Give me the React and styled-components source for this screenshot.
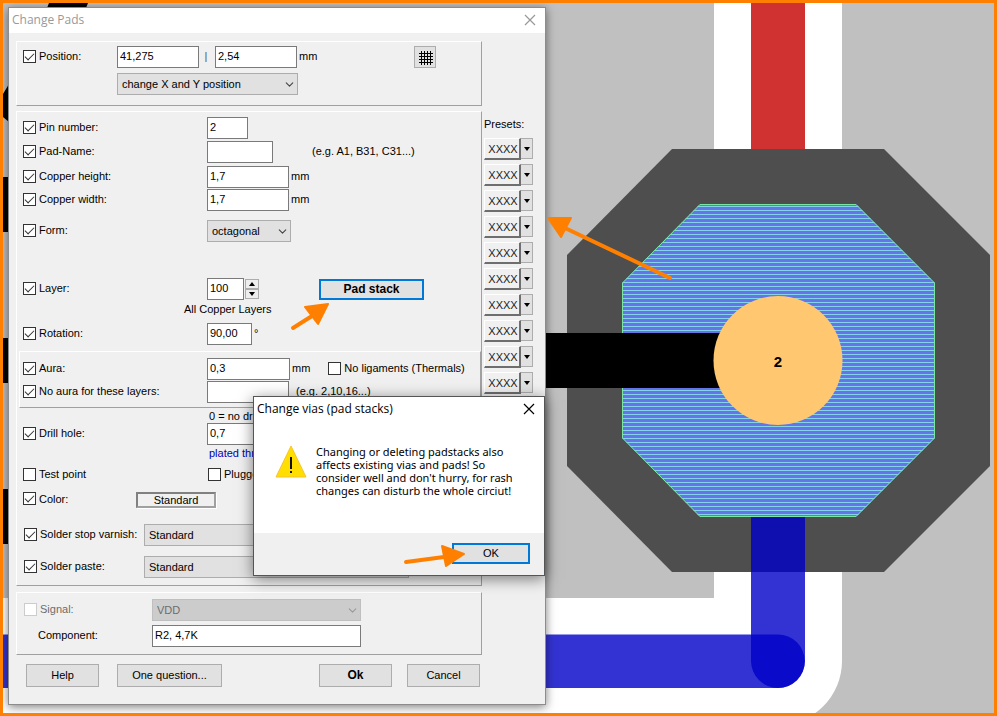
import React from "react";
import styled, { createGlobalStyle, css } from "styled-components";
import { ChevronDown } from "lucide-react";

const GlobalStyle = createGlobalStyle`
  *, *::before, *::after { box-sizing: border-box; }
  body { margin: 0; font: 11px/14px "Liberation Sans", Arial, sans-serif; color: #000; }
  input, select, button { font: inherit; color: inherit; margin: 0; border-radius: 0; }
`;

const Stage = styled.main`
  position: relative;
  min-height: 100vh;
  padding: 4px 5px;
  border: 3px solid #ff8000;
  background: #c0c0c0;
  overflow: hidden;
`;

const Board = styled.svg`
  position: absolute;
  inset: 0;
  width: 100%;
  height: 100%;
`;

const Annotations = styled(Board)`
  pointer-events: none;
`;

const Dialog = styled.section`
  position: relative;
  width: 100%;
  max-width: 538px;
  border: 1px solid #8c8c8c;
  background: #f0f0f0;
  box-shadow: 0 2px 9px rgba(0, 0, 0, 0.5);
`;

const TitleBar = styled.header`
  display: flex;
  align-items: center;
  justify-content: space-between;
  height: 25px;
  padding: 0 7px 2px 3px;
  background: #fff;
  color: ${(p) => (p.$active ? "#000" : "#999")};
`;

const Title = styled.h1`
  margin: 0;
  font: 12px/16px "Open Sans", "Noto Sans", sans-serif;
`;

const CloseButton = styled.button`
  display: grid;
  place-items: center;
  width: 16px;
  height: 16px;
  padding: 0;
  border: 0;
  background: none;
`;

const Body = styled.form`
  display: flex;
  gap: 2px;
  padding: 8px 7px 17px;
`;

const Main = styled.div`
  display: flex;
  flex-direction: column;
  width: 466px;
`;

const Group = styled.div`
  display: flex;
  flex-direction: column;
  margin-top: ${(p) => p.$gap || 0}px;
  padding: ${(p) => p.$pad};
  border: 1px solid;
  border-color: #fff #a0a0a0 #a0a0a0 #fff;
  ${(p) => p.$nested && css`margin-left: 2px;`}
`;

const Row = styled.div`
  display: grid;
  grid-template-columns: ${(p) => p.$label || 184}px 1fr;
  align-items: center;
  min-height: ${(p) => p.$height || 22}px;
  margin-top: ${(p) => p.$gap || 0}px;
  padding-left: ${(p) => p.$indent || 6}px;
`;

const Cell = styled.div`
  display: flex;
  align-items: center;
  grid-column: 2;
  white-space: nowrap;
`;

const Caption = styled.span`
  grid-column: 2;
  padding-left: 2px;
  color: ${(p) => (p.$blue ? "#0000b4" : "inherit")};
  white-space: nowrap;
`;

const Unit = styled.span`
  margin-left: 2px;
  padding-bottom: 2px;
`;

const Hint = styled.span`
  margin-left: ${(p) => p.$by}px;
  padding-bottom: 2px;
`;

const Separator = styled.span`
  width: 16px;
  padding: 0 2px 2px 0;
  text-align: center;
  color: #555;
`;

const Pushed = styled.div`
  display: flex;
  margin-left: ${(p) => p.$by}px;
`;

const CheckLabel = styled.label`
  display: flex;
  align-items: center;
  gap: 3px;
  padding-bottom: 2px;
  white-space: nowrap;
  color: ${(p) => (p.$muted ? "#6d6d6d" : "inherit")};
`;

const PlainLabel = styled.label`
  padding: 0 0 2px 14px;
`;

const Box = styled.input`
  appearance: none;
  display: grid;
  place-items: start center;
  width: 13px;
  height: 13px;
  flex: none;
  border: 1px solid #333;
  background: #fff;
  &:checked::before {
    content: "";
    width: 9px;
    height: 5px;
    margin-top: 2px;
    border: solid #333;
    border-width: 0 0 1px 1px;
    transform: rotate(-45deg);
  }
  &:disabled { border-color: #ccc; }
`;

const Field = styled.input`
  width: ${(p) => p.$w}px;
  height: 22px;
  padding: 0 2px 2px;
  border: 1px solid #7a7a7a;
  background: #fff;
`;

const SelectFrame = styled.div`
  display: inline-grid;
  width: ${(p) => p.$w}px;
  align-items: center;
  & > * { grid-area: 1 / 1; }
  & > svg {
    justify-self: end;
    margin-right: 2px;
    color: ${(p) => (p.$muted ? "#999" : "#444")};
    pointer-events: none;
  }
`;

const Select = styled.select`
  appearance: none;
  width: 100%;
  height: 22px;
  padding: 0 18px 0 4px;
  border: 1px solid #adadad;
  background: #e1e1e1;
  &:disabled {
    border-color: #bfbfbf;
    background: #ccc;
    color: #6d6d6d;
    opacity: 1;
  }
`;

const PushButton = styled.button`
  width: ${(p) => p.$w}px;
  height: ${(p) => p.$h || 23}px;
  padding: 0 0 1px;
  border: ${(p) => (p.$focus ? "2px solid #0078d7" : "1px solid #adadad")};
  background: #e1e1e1;
  ${(p) => p.$strong && css`font: bold 12px/14px "Liberation Sans", Arial, sans-serif;`}
`;

const GridButton = styled.button`
  display: grid;
  place-items: center;
  width: 22px;
  height: 22px;
  padding: 2px 0 0 2px;
  border: 1px solid #adadad;
  background: #e1e1e1;
`;

const ColorButton = styled.button`
  width: 80px;
  height: 16px;
  padding: 0;
  line-height: 12px;
  border: 2px solid;
  border-color: #808080 #a0a0a0 #a0a0a0 #808080;
  box-shadow: 1px 1px 0 #fff;
  background: #f0f0f0;
`;

const Spinner = styled.div`
  display: grid;
  grid-template-rows: 1fr 1fr;
  width: 14px;
  height: 20px;
  margin-left: 1px;
`;

const SpinButton = styled.button`
  display: grid;
  place-items: center;
  padding: 0;
  border: 1px solid #adadad;
  background: #eee;
`;

const Presets = styled.aside`
  display: flex;
  flex-direction: column;
  gap: 4px;
  padding-top: 76px;
`;

const PresetsTitle = styled.span`
  margin-bottom: 3px;
`;

const Preset = styled.div`
  display: grid;
  grid-template-columns: 37px 12px;
  height: 22px;
`;

const PresetButton = styled.button`
  padding: 0 0 0 2px;
  border: solid;
  border-width: 1px 2px 2px 1px;
  border-color: #fff #6e6e6e #6e6e6e #fff;
  background: #f0f0f0;
  color: #222;
`;

const PresetMenu = styled.button`
  display: grid;
  place-items: center;
  height: 21px;
  padding: 0;
  border: 1px solid #adadad;
  border-left: 0;
  background: #e1e1e1;
`;

const Footer = styled.div`
  display: flex;
  justify-content: space-between;
  margin-top: 9px;
  padding: 0 2px 0 10px;
`;

const Actions = styled.div`
  display: flex;
  gap: ${(p) => p.$gap}px;
`;

const Popup = styled.section`
  position: absolute;
  right: 0;
  bottom: 128px;
  width: 292px;
  border: 1px solid #555;
  background: #fff;
  box-shadow: 0 3px 14px rgba(0, 0, 0, 0.5);
`;

const Message = styled.div`
  display: flex;
  gap: 9px;
  min-height: 111px;
  padding: 23px 20px 0 21px;
`;

const MessageText = styled.p`
  margin: 0;
  font: 11px/13px "Noto Sans", sans-serif;
  white-space: pre-line;
`;

const PopupFooter = styled.footer`
  display: flex;
  justify-content: flex-end;
  padding: 10px 14px 11px;
  background: #f0f0f0;
`;

function Check({ label, ...rest }) {
  return (
    <CheckLabel $muted={rest.disabled}>
      <Box type="checkbox" {...rest} />
      {label}
    </CheckLabel>
  );
}

function Dropdown({ w, value, disabled, label }) {
  return (
    <SelectFrame $w={w} $muted={disabled}>
      <Select aria-label={label} disabled={disabled} defaultValue={value}>
        <option>{value}</option>
      </Select>
      <ChevronDown size={13} strokeWidth={2} />
    </SelectFrame>
  );
}

function CloseIcon() {
  return (
    <svg width="12" height="12" viewBox="0 0 12 12" stroke="currentColor" strokeWidth="1.2">
      <path d="M1 1L11 11M11 1L1 11" />
    </svg>
  );
}

function Triangle({ up }) {
  return (
    <svg width="6" height="4" viewBox="0 0 6 4">
      <path d={up ? "M0 4L3 0L6 4Z" : "M0 0L3 4L6 0Z"} />
    </svg>
  );
}

function GridIcon() {
  return (
    <svg width="14" height="14" viewBox="0 0 14 14" stroke="#000" shapeRendering="crispEdges">
      <path d="M2.5 0V14M5.5 0V14M8.5 0V14M11.5 0V14M0 2.5H14M0 5.5H14M0 8.5H14M0 11.5H14" />
    </svg>
  );
}

function WarningIcon() {
  return (
    <svg width="32" height="33" viewBox="0 0 32 33">
      <path d="M16 1L31 32H1Z" fill="#ffde00" stroke="#f5c431" strokeLinejoin="round" />
      <path d="M15 12H17V24H15ZM15 26H17V28H15Z" fill="#111" />
    </svg>
  );
}

const hatch = Array.from({ length: 78 }, (_, i) => 206 + i * 4).filter((y) => y < 516);

function BoardDrawing() {
  return (
    <Board viewBox="3 3 991 710" preserveAspectRatio="xMinYMin slice" aria-hidden="true">
      <defs>
        <clipPath id="pad">
          <path d="M700 204H856L935 283V438L856 517H700L622 438V283Z" />
        </clipPath>
      </defs>
      <path d="M714 0H842V661A64 64 0 0 1 778 725H0V598H714Z" fill="#fff" />
      <path d="M751 0H805V150H751Z" fill="#d03232" />
      <path d="M672 149H884L990 255V466L884 572H672L567 466V255Z" fill="#4e4e4e" />
      <path d="M0 634.5H778A26.5 26.5 0 0 1 778 688H0Z" fill="#0000c8" fillOpacity=".8" />
      <path d="M751 516H805V661A27 27 0 0 1 751 661Z" fill="#0000c8" fillOpacity=".8" />
      <g clipPath="url(#pad)">
        <path d="M620 200H940V520H620Z" fill="#6674ea" />
        {hatch.map((y) => (
          <path key={y} d={`M620 ${y + 0.5}H940`} stroke="#84d4e8" />
        ))}
      </g>
      <path d="M700 204.5H856L934.5 283V438L856 516.5H700L622.5 438V283Z" fill="none" stroke="#78e6a0" />
      <path d="M540 333H730V388H540Z" />
      <circle cx="778" cy="360.5" r="64.5" fill="#ffc870" />
      <text x="778" y="367" textAnchor="middle" fontFamily="Liberation Sans, sans-serif" fontWeight="bold" fontSize="15">
        2
      </text>
      <path d="M49 3H88L86 8H47ZM3 94L9 84V122L3 117ZM3 177H9V232H3ZM3 338H9V383H3ZM3 489H9V544H3Z" />
    </Board>
  );
}

function Arrows() {
  return (
    <Annotations viewBox="3 3 991 710" preserveAspectRatio="xMinYMin slice" aria-hidden="true">
      <g fill="#ff8000" stroke="#ff8000" strokeLinejoin="round" strokeLinecap="round">
        <path d="M548 218L571 218L561 237Z" strokeWidth="2" />
        <path d="M565 228L670 278" strokeWidth="4" />
        <path d="M328 304L305 307L318 324Z" strokeWidth="2" />
        <path d="M312 316L293 328" strokeWidth="4" />
        <path d="M464 554L442 546L446 566Z" strokeWidth="2" />
        <path d="M444 557L406 562" strokeWidth="4" />
      </g>
    </Annotations>
  );
}

export default function App() {
  return (
    <Stage>
      <GlobalStyle />
      <BoardDrawing />
      <Dialog aria-label="Change Pads">
        <TitleBar>
          <Title>Change Pads</Title>
          <CloseButton aria-label="Close"><CloseIcon /></CloseButton>
        </TitleBar>
        <Body onSubmit={(e) => e.preventDefault()}>
          <Main>
            <Group $pad="4px 0 10px">
              <Row $label={94}>
                <Check label="Position:" defaultChecked />
                <Cell>
                  <Field $w={82} aria-label="X position" defaultValue="41,275" />
                  <Separator>|</Separator>
                  <Field $w={82} aria-label="Y position" defaultValue="2,54" />
                  <Unit>mm</Unit>
                  <Pushed $by={97}>
                    <GridButton type="button" aria-label="Grid"><GridIcon /></GridButton>
                  </Pushed>
                </Cell>
              </Row>
              <Row $label={94} $gap={5}>
                <Cell><Dropdown w={181} value="change X and Y position" label="Position mode" /></Cell>
              </Row>
            </Group>

            <Group $gap={5} $pad="5px 0 7px">
              <Row>
                <Check label="Pin number:" defaultChecked />
                <Cell><Field $w={41} aria-label="Pin number" defaultValue="2" /></Cell>
              </Row>
              <Row $gap={2}>
                <Check label="Pad-Name:" defaultChecked />
                <Cell>
                  <Field $w={66} aria-label="Pad-Name" />
                  <Hint $by={39}>(e.g. A1, B31, C31...)</Hint>
                </Cell>
              </Row>
              <Row $gap={3}>
                <Check label="Copper height:" defaultChecked />
                <Cell><Field $w={82} aria-label="Copper height" defaultValue="1,7" /><Unit>mm</Unit></Cell>
              </Row>
              <Row $gap={1}>
                <Check label="Copper width:" defaultChecked />
                <Cell><Field $w={82} aria-label="Copper width" defaultValue="1,7" /><Unit>mm</Unit></Cell>
              </Row>
              <Row $gap={9}>
                <Check label="Form:" defaultChecked />
                <Cell><Dropdown w={84} value="octagonal" label="Form" /></Cell>
              </Row>
              <Row $gap={36}>
                <Check label="Layer:" defaultChecked />
                <Cell>
                  <Field $w={37} aria-label="Layer" defaultValue="100" />
                  <Spinner>
                    <SpinButton type="button" aria-label="Layer up"><Triangle up /></SpinButton>
                    <SpinButton type="button" aria-label="Layer down"><Triangle /></SpinButton>
                  </Spinner>
                  <Pushed $by={60}>
                    <PushButton type="button" $w={105} $h={21} $focus $strong>Pad stack</PushButton>
                  </Pushed>
                </Cell>
              </Row>
              <Row $label={159} $height={18}><Caption>All Copper Layers</Caption></Row>
              <Row $gap={5}>
                <Check label="Rotation:" defaultChecked />
                <Cell><Field $w={45} aria-label="Rotation" defaultValue="90,00" /><Unit>°</Unit></Cell>
              </Row>

              <Group $nested $gap={6} $pad="6px 0 4px">
                <Row $indent={3}>
                  <Check label="Aura:" defaultChecked />
                  <Cell>
                    <Field $w={83} aria-label="Aura" defaultValue="0,3" />
                    <Unit>mm</Unit>
                    <Pushed $by={18}><Check label="No ligaments (Thermals)" /></Pushed>
                  </Cell>
                </Row>
                <Row $gap={1} $indent={3}>
                  <Check label="No aura for these layers:" defaultChecked />
                  <Cell>
                    <Field $w={82} aria-label="No aura for these layers" />
                    <Hint $by={7}>(e.g. 2,10,16...)</Hint>
                  </Cell>
                </Row>
              </Group>

              <Row $height={15}><Caption>0 = no drilling</Caption></Row>
              <Row>
                <Check label="Drill hole:" defaultChecked />
                <Cell><Field $w={82} aria-label="Drill hole" defaultValue="0,7" /></Cell>
              </Row>
              <Row $height={15}><Caption $blue>plated through</Caption></Row>
              <Row $gap={7} $height={16} $label={185}>
                <Check label="Test point" />
                <Check label="Plugged" />
              </Row>
              <Row $gap={8} $height={17} $label={113}>
                <Check label="Color:" defaultChecked />
                <Cell><ColorButton type="button">Standard</ColorButton></Cell>
              </Row>
              <Row $gap={16} $label={120} $indent={7}>
                <Check label="Solder stop varnish:" defaultChecked />
                <Cell><Dropdown w={265} value="Standard" label="Solder stop varnish" /></Cell>
              </Row>
              <Row $gap={10} $label={120} $indent={7}>
                <Check label="Solder paste:" defaultChecked />
                <Cell><Dropdown w={265} value="Standard" label="Solder paste" /></Cell>
              </Row>
            </Group>

            <Group $gap={6} $pad="6px 0 7px">
              <Row $label={128} $indent={7}>
                <Check label="Signal:" disabled />
                <Cell><Dropdown w={209} value="VDD" label="Signal" disabled /></Cell>
              </Row>
              <Row $gap={4} $label={128} $indent={7}>
                <PlainLabel htmlFor="component">Component:</PlainLabel>
                <Cell><Field id="component" $w={209} defaultValue="R2, 4,7K" /></Cell>
              </Row>
            </Group>

            <Footer>
              <Actions $gap={18}>
                <PushButton type="button" $w={73}>Help</PushButton>
                <PushButton type="button" $w={105}>One question...</PushButton>
              </Actions>
              <Actions $gap={15}>
                <PushButton type="submit" $w={73} $strong>Ok</PushButton>
                <PushButton type="button" $w={73}>Cancel</PushButton>
              </Actions>
            </Footer>
          </Main>

          <Presets>
            <PresetsTitle>Presets:</PresetsTitle>
            {Array.from({ length: 10 }, (_, i) => (
              <Preset key={i}>
                <PresetButton type="button">XXXX</PresetButton>
                <PresetMenu type="button" aria-label={`Preset ${i + 1} menu`}><Triangle /></PresetMenu>
              </Preset>
            ))}
          </Presets>
        </Body>

        <Popup role="alertdialog" aria-label="Change vias (pad stacks)">
          <TitleBar $active>
            <Title>Change vias (pad stacks)</Title>
            <CloseButton aria-label="Close message"><CloseIcon /></CloseButton>
          </TitleBar>
          <Message>
            <WarningIcon />
            <MessageText>
              {"Changing or deleting padstacks also\naffects existing vias and pads! So\nconsider well and don't hurry, for rash\nchanges can disturb the whole circiut!"}
            </MessageText>
          </Message>
          <PopupFooter>
            <PushButton type="button" $w={78} $h={21} $focus>OK</PushButton>
          </PopupFooter>
        </Popup>
      </Dialog>
      <Arrows />
    </Stage>
  );
}
